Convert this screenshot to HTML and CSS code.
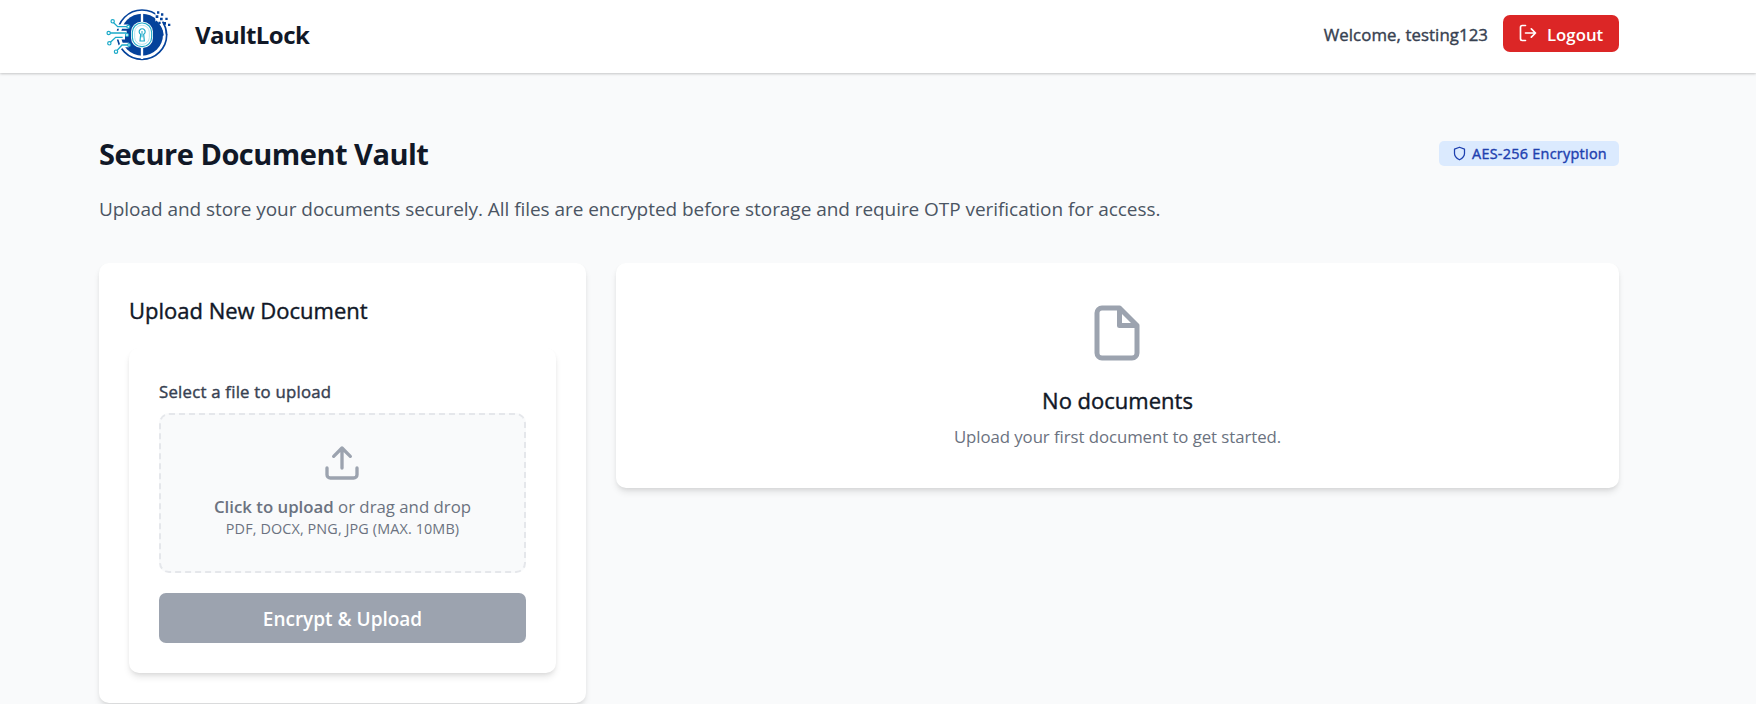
FILE: index.html
```html
<!DOCTYPE html>
<html lang="en">
<head>
<meta charset="utf-8">
<title>VaultLock</title>
<link rel="stylesheet" href="styles.css">
</head>
<body>
<header class="topbar">
  <div class="brand">
    <svg class="logo" viewBox="45 25 201 162" fill="none">
      <circle cx="156" cy="105" r="74" stroke="#04429b" stroke-width="5"/>
      <circle cx="156" cy="105" r="63" fill="#04429b"/>
      <path d="M156 36V68M156 142V178" stroke="#fff" stroke-width="7"/>
      <path d="M196 28H250V104H231L224 92H212V80H204V66H196Z" fill="#fff"/>
      <path d="M196 66C208 78 215 88 217 108" stroke="#04429b" stroke-width="9"/>
      <path d="M218 66Q229 84 230 105" stroke="#04429b" stroke-width="5"/>
      <g fill="#04429b">
        <path d="M201 35h7v7h-7zM213 41h7v7h-7zM226 54h7v7h-7zM234 72h7v7h-7zM197 47h8v8h-8zM210 54h8v8h-8zM220 67h8v8h-8zM205 66h7v7h-7z"/>
      </g>
      <path d="M68 66L83 81H115M56 100H110M58 131L77 113H105M78 156L96 136H117" stroke="#fff" stroke-width="13"/>
      <path d="M68 66L83 81H115M56 100H110M58 131L77 113H98M78 156L96 136H117" stroke="#1aa9c8" stroke-width="4"/>
      <g fill="#fff" stroke="#1aa9c8" stroke-width="3.5">
        <circle cx="68" cy="65" r="5"/><circle cx="56" cy="100" r="5"/><circle cx="58" cy="131" r="5"/><circle cx="78" cy="156" r="5"/>
        <circle cx="115" cy="81" r="4.500"/><circle cx="111" cy="106" r="4.500"/><circle cx="117" cy="136" r="4"/>
      </g>
      <rect x="123" y="66" width="66" height="79" rx="31" fill="#fff"/>
      <rect x="127" y="70" width="58" height="71" rx="28" stroke="#1aa9c8" stroke-width="3.500"/>
      <rect x="134" y="77" width="44" height="57" rx="21" stroke="#8ed3e3" stroke-width="2"/>
      <path d="M152 104A9 9 0 1 1 161 104L163 124H150Z" stroke="#1aa9c8" stroke-width="3.500"/>
      <path d="M156 94V113" stroke="#1aa9c8" stroke-width="3"/>
    </svg>
    <span class="brand-name">VaultLock</span>
  </div>
  <div class="account">
    <span class="welcome">Welcome, testing123</span>
    <button class="logout">
      <svg class="icon-logout" viewBox="0 0 24 24"><path d="M9 21H5a2 2 0 0 1-2-2V5a2 2 0 0 1 2-2h4M16 17l5-5-5-5M21 12H9"/></svg>
      <span>Logout</span>
    </button>
  </div>
</header>
<main class="page">
  <div class="title-row">
    <h1>Secure Document Vault</h1>
    <div class="badge">
      <svg class="icon-shield" viewBox="0 0 24 24"><path d="M12 22s8-4 8-10V5l-8-3-8 3v7c0 6 8 10 8 10z"/></svg>
      <span>AES-256 Encryption</span>
    </div>
  </div>
  <p class="intro">Upload and store your documents securely. All files are encrypted before storage and require OTP verification for access.</p>
  <div class="columns">
    <section class="card upload-card">
      <h2>Upload New Document</h2>
      <div class="card upload-form">
        <label class="field-label">Select a file to upload</label>
        <div class="dropzone">
          <svg class="icon-upload" viewBox="0 0 24 24"><path d="M21 15v4a2 2 0 0 1-2 2H5a2 2 0 0 1-2-2v-4M17 8l-5-5-5 5M12 3v12"/></svg>
          <p class="drop-main"><b>Click to upload</b> or drag and drop</p>
          <p class="drop-hint">PDF, DOCX, PNG, JPG (MAX. 10MB)</p>
        </div>
        <button class="submit">Encrypt &amp; Upload</button>
      </div>
    </section>
    <section class="card empty-card">
      <svg class="icon-file" viewBox="0 0 24 24"><path d="M13 2H6a2 2 0 0 0-2 2v16a2 2 0 0 0 2 2h12a2 2 0 0 0 2-2V9zM13 2v7h7"/></svg>
      <h3>No documents</h3>
      <p class="empty-text">Upload your first document to get started.</p>
    </section>
  </div>
</main>
</body>
</html>
```
FILE: styles.css
```css
* { box-sizing: border-box; margin: 0; }
body {
  font-family: "Open Sans", "Noto Sans", sans-serif;
  background: #f9fafb;
  color: #111827;
  height: 704px;
  overflow: hidden;
}
svg { display: block; flex: none; }
button { border: 0; font-family: inherit; color: #fff; }
svg[class^="icon"] { fill: none; stroke: currentColor; stroke-width: 2; stroke-linecap: round; stroke-linejoin: round; }

/* Medium weight: Open Sans regular, slightly thickened */
.welcome, .badge span, h2, h3, .field-label { font-weight: 400; -webkit-text-stroke: 0.4px currentColor; }

.topbar {
  display: flex;
  justify-content: space-between;
  height: 73px;
  padding: 0 137px 0 105px;
  background: #fff;
  box-shadow: 0 1px 3px rgba(0,0,0,.12), 0 1px 2px rgba(0,0,0,.1);
}
.brand { display: flex; gap: 23px; }
.logo { width: 67px; height: 54px; margin-top: 8px; }
.brand-name { font-size: 24px; font-weight: 700; line-height: 70px; letter-spacing: -0.55px; }
.account { display: flex; align-items: flex-start; gap: 15px; padding-top: 15px; }
.welcome { font-size: 16.8px; line-height: 40px; letter-spacing: 0.08px; color: #374151; }
.logout {
  display: flex;
  align-items: center;
  gap: 9px;
  width: 116px;
  height: 37px;
  padding: 0 15px;
  border-radius: 7px;
  background: #dc2626;
  font-size: 16.8px;
  font-weight: 600;
}
.logout span { padding-top: 2px; }
.icon-logout { width: 20px; height: 20px; margin-top: -1px; }

.page { padding: 58px 137px 0 99px; }
.title-row { display: flex; justify-content: space-between; align-items: center; height: 45px; }
h1 { font-size: 29px; font-weight: 700; letter-spacing: -0.5px; }
.badge {
  display: flex;
  align-items: center;
  gap: 5px;
  width: 180px;
  height: 25px;
  padding-left: 13px;
  border-radius: 5px;
  background: #dbeafe;
  color: #1e40af;
  font-size: 14.4px;
  letter-spacing: 0.28px;
}
.icon-shield { width: 15px; height: 15px; }
.intro { margin-top: 16px; font-size: 19px; line-height: 35px; letter-spacing: -0.055px; color: #4b5563; white-space: nowrap; }
.columns { display: grid; grid-template-columns: 487px 1003px; gap: 30px; align-items: start; margin-top: 36px; }
.card { background: #fff; border-radius: 10px; box-shadow: 0 5px 7px -1px rgba(0,0,0,.1), 0 2px 5px -2px rgba(0,0,0,.1); }
.upload-card { height: 440px; padding: 30px; }
h2 { font-size: 22px; line-height: 35px; }
.upload-form { height: 325px; margin-top: 20px; padding: 30px; }
.field-label { display: block; font-size: 16.8px; line-height: 27px; letter-spacing: 0.22px; color: #374151; }
.dropzone {
  display: flex;
  flex-direction: column;
  align-items: center;
  height: 160px;
  margin-top: 8px;
  padding-top: 28px;
  border: 2px dashed #e5e7eb;
  border-radius: 10px;
  background: #f9fafb;
  color: #6b7280;
}
.icon-upload { width: 40px; height: 40px; margin-right: 1px; color: #9ca3af; }
.drop-main { margin-top: 11px; font-size: 16.8px; line-height: 25px; }
.drop-main b { font-weight: 600; }
.drop-hint { font-size: 14.4px; line-height: 20px; letter-spacing: 0.12px; }
.submit {
  display: block;
  width: 100%;
  height: 50px;
  margin-top: 20px;
  padding: 2px 0 0;
  border-radius: 7px;
  background: #9ca3af;
  font-size: 19px;
  font-weight: 600;
}
.empty-card { display: flex; flex-direction: column; align-items: center; height: 225px; padding-top: 40px; }
.icon-file { width: 60px; height: 60px; margin-right: 1px; color: #9ca3af; }
h3 { margin-top: 20px; font-size: 22px; line-height: 35px; }
.empty-text { margin-top: 6px; font-size: 16.8px; line-height: 25px; letter-spacing: -0.06px; color: #6b7280; }
```
